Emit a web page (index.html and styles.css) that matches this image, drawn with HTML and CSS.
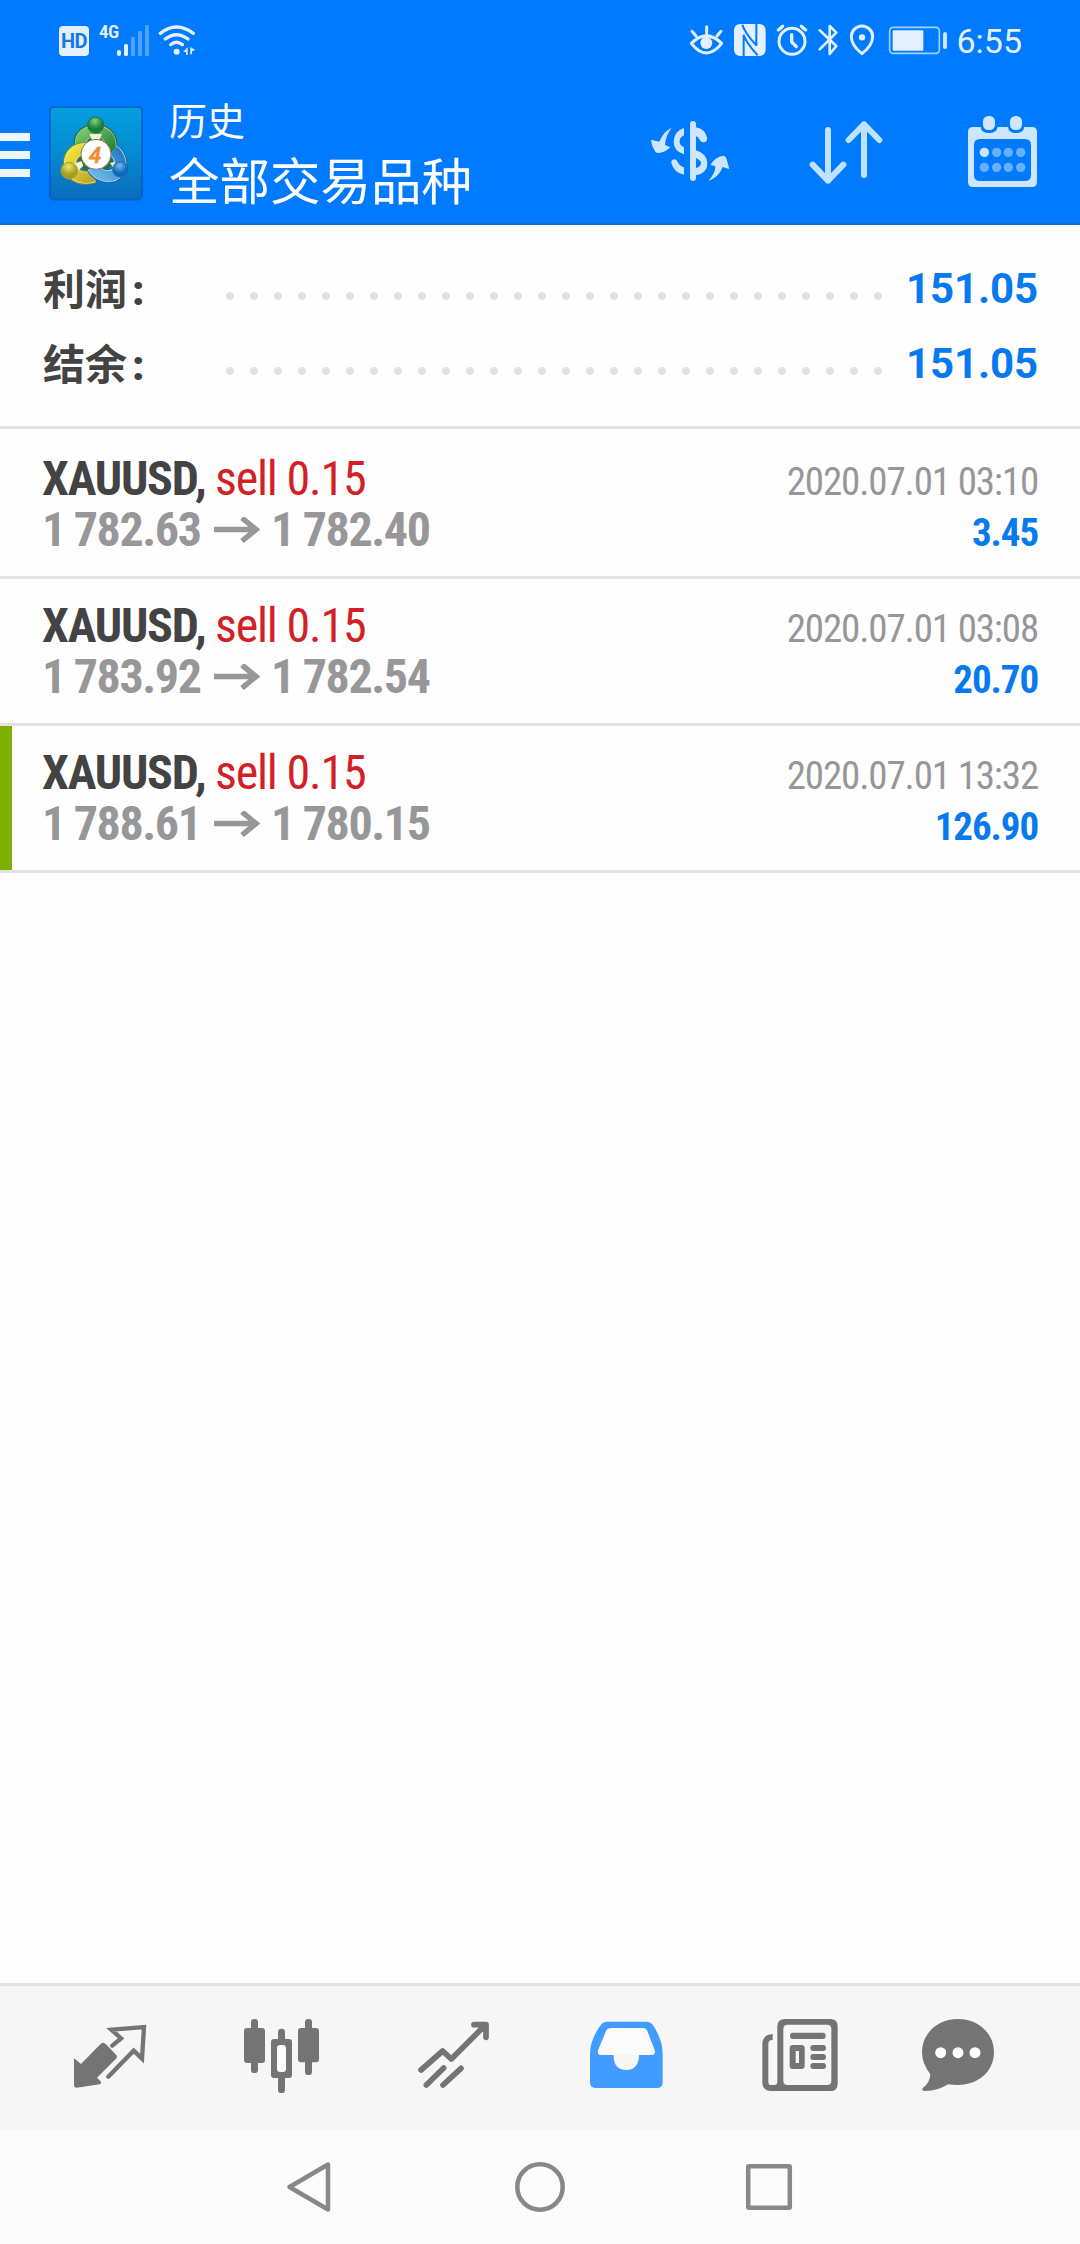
FILE: index.html
```html
<!DOCTYPE html>
<html lang="zh-CN">
<head>
<meta charset="utf-8">
<title>历史</title>
<link rel="stylesheet" href="styles.css">
</head>
<body>
<div class="screen">
  <header class="top">
    <div class="status">
      <div class="status-left">
        <span class="hd">HD</span>
        <span class="net">4G</span>
        <svg class="signal" width="32" height="31" viewBox="0 0 32 31" fill="#e2f0ff">
          <rect x="0" y="25" width="4" height="6" rx="2"/><rect x="7" y="19" width="4" height="12" rx="1.5"/>
          <g opacity=".35"><rect x="14" y="12" width="4" height="19" rx="1"/><rect x="21" y="6" width="4" height="25" rx="1"/><rect x="28" y="0" width="4" height="31" rx="1"/></g>
        </svg>
        <svg class="wifi" width="38" height="32" viewBox="474 72 114 96" fill="none" stroke="#e2f0ff" stroke-width="10" stroke-linecap="round">
          <path d="M481 100Q529 62 580 100M496 117Q529 91 564 117M512 134Q529 120 547 134"/>
          <circle cx="530" cy="155" r="9" fill="#e2f0ff" stroke="none"/>
          <path d="M549 156l14-14v22h-5v-8zM571 141v22h5v-9l10-4z" fill="#e2f0ff" stroke="none"/>
        </svg>
      </div>
      <div class="status-right">
        <svg width="253" height="36" viewBox="84 66 759 108" fill="none" stroke="#e2f0ff" stroke-width="9" stroke-linecap="round" stroke-linejoin="round">
          <path d="M94 130Q139 85 185 130Q139 188 94 130zM140 80v20M96 94l12 14M183 94l-12 14"/>
          <circle cx="139" cy="129" r="18" fill="#e2f0ff" stroke="none"/>
          <rect x="222" y="72" width="95" height="96" rx="18" fill="#e2f0ff" stroke="none"/>
          <path d="M251 104V168M289 72v66M247 74q6 22 42 62M251 104q6 22 42 62" stroke="#007aff" stroke-width="6" stroke-linecap="butt"/>
          <circle cx="396" cy="124" r="39"/>
          <path d="M395 104v22l14 14M355 90l13-11M424 79l13 11" stroke-width="10"/>
          <path d="M479 91l50 47-20 24V78l20 20-50 50" stroke-width="8"/>
          <path d="M606 161Q574 135 574 110a32 32 0 0 1 64 0Q638 135 606 161z"/>
          <circle cx="606" cy="112" r="9.500" fill="#e2f0ff" stroke="none"/>
          <rect x="689" y="82" width="149" height="78" rx="10" stroke="#9fd2ff" stroke-width="5"/>
          <rect x="698" y="91" width="92" height="61" rx="3" fill="#e2f0ff" stroke="none"/>
        </svg>
        <span class="battery-cap"></span>
        <span class="clock">6:55</span>
      </div>
    </div>
    <div class="appbar">
      <div class="menu"><i></i><i></i><i></i></div>
      <svg class="logo" width="94" height="95" viewBox="147 317 282 285">
        <defs>
          <linearGradient id="bg" x1="0" y1="0" x2="0" y2="1"><stop offset="0" stop-color="#059fe0"/><stop offset=".5" stop-color="#058bd2"/><stop offset="1" stop-color="#0a6cbc"/></linearGradient>
          <linearGradient id="gr" x1="0" y1="0" x2="1" y2="1"><stop offset="0" stop-color="#7cc570"/><stop offset="1" stop-color="#1f8030"/></linearGradient>
          <linearGradient id="ye" x1="0" y1="0" x2="1" y2="1"><stop offset="0" stop-color="#f2e53c"/><stop offset="1" stop-color="#bfa52c"/></linearGradient>
          <linearGradient id="bl" x1="1" y1="0" x2="0" y2="1"><stop offset="0" stop-color="#2779c2"/><stop offset="1" stop-color="#6dbcec"/></linearGradient>
          <radialGradient id="gh" cx=".45" cy=".25"><stop offset="0" stop-color="#7fd07a"/><stop offset="1" stop-color="#168038"/></radialGradient>
          <radialGradient id="yh" cx=".45" cy=".25"><stop offset="0" stop-color="#eee86a"/><stop offset="1" stop-color="#a79e20"/></radialGradient>
          <radialGradient id="bh" cx=".45" cy=".25"><stop offset="0" stop-color="#6fbef2"/><stop offset="1" stop-color="#1268b8"/></radialGradient>
        </defs>
        <rect x="150" y="320" width="276" height="278" rx="12" fill="url(#bg)" stroke="#0062c6" stroke-width="5"/>
        <circle cx="287" cy="468" r="54" fill="#2c6d44"/>
        <g fill="none">
          <path d="M244 440C236 406 260 393 287 393C320 393 340 416 328 460" stroke="#1b6a38" stroke-width="42"/>
          <path d="M244 440C236 406 260 393 287 393C320 393 340 416 328 460" stroke="#9fd290" stroke-width="36"/>
          <path d="M244 440C236 406 260 393 287 393C320 393 340 416 328 460" stroke="url(#gr)" stroke-width="31"/>
          <path d="M258 446C220 446 206 472 211 499C219 530 250 538 282 528" stroke="#8d8a2a" stroke-width="42"/>
          <path d="M258 446C220 446 206 472 211 499C219 530 250 538 282 528" stroke="#f2eb90" stroke-width="36"/>
          <path d="M258 446C220 446 206 472 211 499C219 530 250 538 282 528" stroke="url(#ye)" stroke-width="31"/>
          <path d="M340 450C363 468 367 496 354 514C335 537 296 530 278 500" stroke="#1560a4" stroke-width="42"/>
          <path d="M340 450C363 468 367 496 354 514C335 537 296 530 278 500" stroke="#a4d6f5" stroke-width="36"/>
          <path d="M340 450C363 468 367 496 354 514C335 537 296 530 278 500" stroke="url(#bl)" stroke-width="31"/>
        </g>
        <path d="M268 401h38l-8 18h-22zM222 490l22-8 6 14-14 14zM330 488l12-4 12 12-10 12z" fill="#f2f4d4"/>
        <circle cx="287" cy="374" r="24" fill="url(#gh)" stroke="#1b7534" stroke-width="3"/>
        <circle cx="208" cy="511" r="25" fill="url(#yh)" stroke="#b0a22f" stroke-width="3"/>
        <circle cx="361" cy="507" r="23" fill="url(#bh)" stroke="#1769ae" stroke-width="3"/>
        <circle cx="288" cy="462" r="45" fill="#fff" stroke="#8b7755" stroke-width="3"/>
        <text x="285" y="487" class="logo-num">4</text>
      </svg>
      <div class="titles">
        <div class="subtitle">历史</div>
        <div class="title">全部交易品种</div>
      </div>
      <div class="actions">
        <svg width="100" height="100" viewBox="60 30 300 300" fill="#cde6fd">
          <rect x="210" y="93" width="18" height="180" rx="9"/>
          <path d="M192 114v22q-14 6-13 20q0 10 13 16v21q-31-10-31-37q0-32 31-42z"/>
          <path d="M228 112q27 5 33 31q1 10-6 13q-8 3-14-4q-5-10-13-14zM228 181q34 10 34 40q0 28-34 35v-22q15-4 15-15q0-8-15-15zM192 232v22q-30-5-38-35q-1-11 10-11q6 1 9 8q5 12 19 16z"/>
          <path d="M155 113q-22 8-37 42l-25-6q1 18 13 36q4 5 12 4q18-2 33-17l-16-7q2-28 20-52z"/>
          <path d="M265 273q22-24 21-44l-14-4q11-24 39-28q7 2 9 11l8 29l-20-6q-11 30-43 42z"/>
        </svg>
        <svg width="100" height="100" viewBox="531 30 300 300" fill="none" stroke="#bfe3ff" stroke-width="18" stroke-linecap="round" stroke-linejoin="round">
          <path d="M624 120V272M578 224l46 48 46-48M732 255V103M686 150l46-47 46 47"/>
        </svg>
        <svg width="100" height="100" viewBox="1002 30 300 300" fill="#cde6fd">
          <path fill-rule="evenodd" d="M1059 111h23q2 18 25 18t26-18h31q2 18 24 18t25-18h23q15 0 15 15v150q0 15-15 15h-177q-15 0-15-15V126q0-15 15-15zM1080 147q-18 0-18 18v90q0 18 18 18h135q18 0 18-18v-90q0-18-18-18z"/>
          <rect x="1089" y="78" width="36" height="42" rx="16"/><rect x="1170" y="78" width="36" height="42" rx="16"/>
          <circle cx="1093" cy="187" r="14"/>
          <g fill="#66b0fe"><circle cx="1130" cy="187" r="14"/><circle cx="1165" cy="187" r="14"/><circle cx="1202" cy="187" r="14"/><circle cx="1093" cy="232" r="14"/><circle cx="1130" cy="232" r="14"/><circle cx="1165" cy="232" r="14"/><circle cx="1202" cy="232" r="14"/></g>
        </svg>
      </div>
    </div>
  </header>

  <section class="summary">
    <div class="sum-row"><span class="label">利润<b>:</b></span><span class="dots"></span><span class="amount">151.05</span></div>
    <div class="sum-row"><span class="label">结余<b>:</b></span><span class="dots"></span><span class="amount">151.05</span></div>
  </section>

  <main class="deals">
    <article class="deal">
      <div class="line"><span class="symbol">XAUUSD,</span><span class="side">sell 0.15</span><time>2020.07.01 03:10</time></div>
      <div class="line"><span class="price">1 782.63</span><svg class="arrow" width="46" height="26" viewBox="0 0 46 26"><path d="M0 12.500H42M28 1L42 12.500L28 24" fill="none" stroke="#979799" stroke-width="5.500"/></svg><span class="price">1 782.40</span><span class="profit">3.45</span></div>
    </article>
    <article class="deal">
      <div class="line"><span class="symbol">XAUUSD,</span><span class="side">sell 0.15</span><time>2020.07.01 03:08</time></div>
      <div class="line"><span class="price">1 783.92</span><svg class="arrow" width="46" height="26" viewBox="0 0 46 26"><path d="M0 12.500H42M28 1L42 12.500L28 24" fill="none" stroke="#979799" stroke-width="5.500"/></svg><span class="price">1 782.54</span><span class="profit">20.70</span></div>
    </article>
    <article class="deal marked">
      <div class="line"><span class="symbol">XAUUSD,</span><span class="side">sell 0.15</span><time>2020.07.01 13:32</time></div>
      <div class="line"><span class="price">1 788.61</span><svg class="arrow" width="46" height="26" viewBox="0 0 46 26"><path d="M0 12.500H42M28 1L42 12.500L28 24" fill="none" stroke="#979799" stroke-width="5.500"/></svg><span class="price">1 780.15</span><span class="profit">126.90</span></div>
    </article>
  </main>

  <nav class="tabs">
    <svg viewBox="-39 48 513 432" fill="#747474">
      <path d="M189 218q5 0 9 5l30 31q6 6 0 12l-57 57l11 11q4 7-3 9l-69 10q-8 0-8-8v-80l21 17l58-59q4-5 8-5z"/>
      <path d="M217 227l26-22-29-26 98-8-6 95-25-24-76 78" fill="none" stroke="#747474" stroke-width="13" stroke-linecap="round" stroke-linejoin="miter"/>
    </svg>
    <svg viewBox="474 48 513 432" fill="#747474">
      <rect x="612" y="174" width="63" height="105" rx="9"/><rect x="633" y="147" width="21" height="162" rx="10"/>
      <rect x="774" y="174" width="63" height="103" rx="9"/><rect x="795" y="147" width="21" height="168" rx="10"/>
      <rect x="714" y="176" width="21" height="193" rx="10"/><rect x="693" y="207" width="63" height="117" rx="9"/>
      <rect x="711" y="225" width="27" height="81" rx="9" fill="#fbfbfb"/>
    </svg>
    <svg viewBox="987 48 513 432" fill="none" stroke="#747474" stroke-width="17" stroke-linecap="round" stroke-linejoin="round">
      <path d="M1143 300l65-57 26 24 96-96M1302 164h36v38M1159 345l52-51M1209 345l54-50"/>
      <path d="M1325 164l13 0v14z" stroke-width="14"/>
    </svg>
    <svg viewBox="0 48 513 432">
      <path d="M200 165h121l30 90H168z" fill="#fbfbfb"/>
      <path fill="#429cff" fill-rule="evenodd" d="M200 155h121q10 0 16 8q31 45 31 88v85q0 18-18 18H168q-18 0-18-18v-85q0-43 34-88q6-8 16-8zM213 174q-10 0-15 9l-24 58q-3 13 9 14h38q-1 45 38 45q37 0 38-45h38q12-1 9-14l-22-58q-4-9-13-9z"/>
    </svg>
    <svg viewBox="513 48 513 432" fill="#747474">
      <path fill-rule="evenodd" d="M735 147h136q22 0 22 22v172q0 22-22 22H690q-23-2-23-26V219q2-25 31-27v18q-13-1-13 12v113q0 10 9 10h9q9 0 9-9V169q0-22 23-22zM743 164q-13 0-13 13v155q0 13 13 13h118q13 0 13-13V177q0-13-13-13z"/>
      <rect x="750" y="188" width="107" height="19" rx="9"/><rect x="811" y="225" width="47" height="18" rx="9"/><rect x="811" y="252" width="47" height="18" rx="9"/><rect x="811" y="279" width="47" height="18" rx="9"/>
      <path fill-rule="evenodd" d="M759 225h26q9 0 9 9v54q0 9-9 9h-26q-10 0-10-9v-54q0-9 10-9zM767 243v36h10v-36z"/>
    </svg>
    <svg viewBox="1026 48 513 432" fill="#747474">
      <path d="M1254 147c61 0 108 43 108 100s-47 98-108 98q-16 0-30-2q-27 19-70 20q-10-1-6-8q22-17 23-42q-25-32-25-66c0-57 47-100 108-100z"/>
      <circle cx="1202" cy="248" r="16.500" fill="#fff"/><circle cx="1254" cy="248" r="16.500" fill="#fff"/><circle cx="1305" cy="248" r="16.500" fill="#fff"/>
    </svg>
  </nav>

  <nav class="system">
    <svg width="50" height="54" viewBox="0 0 50 54"><path d="M43 4.500V49.500L4.500 27z"/></svg>
    <svg width="54" height="54" viewBox="0 0 54 54"><circle cx="27" cy="27" r="22.700"/></svg>
    <svg width="50" height="54" viewBox="0 0 50 54"><rect x="4.200" y="6.200" width="41.600" height="41.600" rx="1"/></svg>
  </nav>
</div>
</body>
</html>
```

FILE: styles.css
```css
* { box-sizing: border-box; }
body {
  margin: 0;
  background: #fefefe;
  font-family: Roboto, "Noto Sans CJK SC", sans-serif;
}
svg { display: block; flex: none; }
.screen {
  width: 1080px;
  height: 2244px;
  display: flex;
  flex-direction: column;
}

/* Status bar and app bar */
.top {
  height: 225px;
  background: linear-gradient(#007aff 222px, #1767bd 225px);
  color: #fff;
}
.status {
  height: 81px;
  display: flex;
  justify-content: space-between;
  padding: 22px 58px 0 59px;
}
.status-left, .status-right { display: flex; align-items: flex-start; color: #e2f0ff; }
.hd {
  width: 30px;
  height: 30px;
  margin-top: 4px;
  border-radius: 4px;
  background: #e2f0ff;
  color: #1a78e0;
  font: bold 20px/30px Roboto, sans-serif;
  letter-spacing: -0.5px;
  text-align: center;
}
.net {
  width: 18px;
  margin: -1px 0 0 10px;
  font: 600 19px/22px "Roboto Condensed", Roboto, sans-serif;
  font-stretch: 75%;
  letter-spacing: -0.5px;
}
.signal { margin-top: 3px; }
.wifi { margin: 2px 0 0 9px; }
.battery-cap {
  width: 4px;
  height: 17px;
  margin: 10px 9px 0 2px;
  border-radius: 2px;
  background: #c9e4ff;
}
.clock { font-size: 34px; line-height: 39px; }

.appbar {
  height: 144px;
  display: flex;
  align-items: flex-start;
  padding-right: 26px;
}
.menu { display: grid; gap: 10px; margin: 52px 19px 0 0; }
.menu i { width: 30px; height: 8px; background: #eef7ff; }
.logo { margin-top: 25px; }
.logo-num {
  font: italic 500 66px Roboto, sans-serif;
  fill: #f58a2e;
  stroke: #f58a2e;
  stroke-width: 2px;
  text-anchor: middle;
}
.titles {
  margin-left: 26px;
  padding-top: 12px;
  font-family: "Noto Sans CJK SC", sans-serif;
}
.subtitle { font-size: 38px; line-height: 52px; }
.title { font-size: 50.5px; line-height: 66px; }
.actions { display: flex; gap: 57px; margin: 19px 0 0 auto; }

/* Totals */
.summary {
  height: 204px;
  padding: 26px 42px 0;
  border-bottom: 3px solid #e3e3e3;
}
.sum-row { height: 75px; display: flex; align-items: center; }
.label {
  width: 176px;
  padding-left: 1px;
  font: bold 42px/75px "Noto Sans CJK SC", sans-serif;
  color: #434343;
}
.label b { margin-left: 5px; font-family: Roboto, sans-serif; font-weight: 900; }
.dots {
  width: 672px;
  height: 8px;
  margin-top: 15px;
  background: radial-gradient(circle at 12px 4px, #e1e1e1 3.5px, transparent 4.5px) 0 0 / 24px 8px;
}
.amount {
  margin-left: auto;
  font: bold 42px/75px Roboto, sans-serif;
  letter-spacing: -0.1px;
  color: #087aef;
}

/* Deals */
.deals { flex: 1; }
.deal {
  height: 147px;
  padding: 21px 42px 0;
  border-bottom: 3px solid #e3e3e3;
  font-family: "Roboto Condensed", Roboto, sans-serif;
  font-stretch: 75%;
}
.deal:first-child { height: 150px; padding-top: 24px; }
.marked { background: linear-gradient(#7fb000, #7fb000) 0 0 / 12px 100% no-repeat; }
.line {
  height: 51px;
  display: flex;
  align-items: baseline;
  font-size: 48px;
  line-height: 51px;
  letter-spacing: -1.2px;
  white-space: nowrap;
}
.symbol { width: 161px; font-weight: bold; color: #434343; }
.side { margin-left: 12px; color: #d31f26; }
.price { width: 161px; font-weight: bold; color: #979799; letter-spacing: -1.4px; word-spacing: -0.8px; }
.arrow { align-self: flex-start; margin: 13px 11px 0 11px; }
.line time { margin-left: auto; font-size: 39px; letter-spacing: -1.15px; color: #979799; }
.profit { margin-left: auto; font-size: 39px; font-weight: bold; letter-spacing: -1.1px; color: #087aef; }

/* Bottom tabs */
.tabs {
  height: 147px;
  display: grid;
  grid-template-columns: repeat(6, 171px);
  justify-content: center;
  border-top: 3px solid #e3e3e3;
  background: #f6f6f6;
}
.tabs svg { width: 171px; height: 144px; }

/* System navigation */
.system {
  height: 114px;
  display: flex;
  justify-content: space-between;
  align-items: center;
  padding: 0 286px 0 285px;
  background: #fcfcfc;
}
.system svg { fill: none; stroke: #888; stroke-width: 4.5; stroke-linejoin: round; }
```
